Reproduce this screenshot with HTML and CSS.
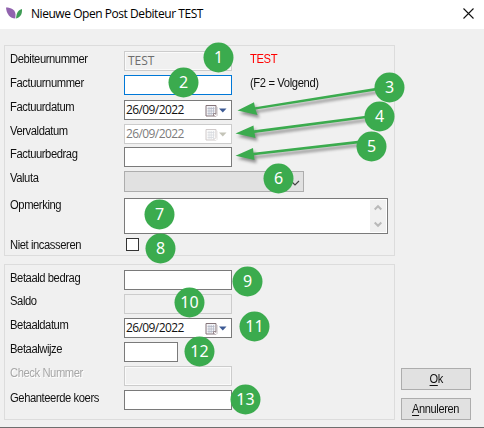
FILE: index.html
```
<!DOCTYPE html>
<html lang="nl">
<head>
<meta charset="utf-8">
<title>Nieuwe Open Post Debiteur TEST</title>
<link rel="stylesheet" href="styles.css">
</head>
<body>
<svg class="defs" width="0" height="0">
  <symbol id="cal" viewBox="0 0 22 13">
    <path d="M1 1.5h10v8l-2.5 2.5h-7.5z" fill="#f3f3f6" stroke="#85757a"/>
    <path d="M12 3v8.5l-1 1H3" fill="none" stroke="#c4bcbf"/>
    <path d="M2.500 4.500h7M2.500 7h7M2.500 9.500h6M4 3v8M6.200 3v8M8.500 3v8" stroke="#b4b9c8" stroke-width=".8"/>
    <path d="M8.500 12v-2.500h2.500" fill="#fff" stroke="#85757a" stroke-width=".8"/>
    <path d="M14 4.500h7.500l-3.750 4z" fill="#3d5a94"/>
  </symbol>
  <symbol id="cal-off" viewBox="0 0 22 13">
    <path d="M1 1.5h10v8l-2.5 2.5h-7.5z" fill="#fafafa" stroke="#d0caca"/>
    <path d="M12 3v8.5l-1 1H3" fill="none" stroke="#e6e4e4"/>
    <path d="M2.500 4.500h7M2.500 7h7M2.500 9.500h6M4 3v8M6.200 3v8M8.500 3v8" stroke="#d8dae0" stroke-width=".8"/>
    <path d="M14 4.500h7.500l-3.750 4z" fill="#c4c4b8"/>
  </symbol>
</svg>
<div class="window">
  <header class="titlebar">
    <svg class="logo" width="17" height="13" viewBox="0 0 17 13">
      <path d="M0 .5C5 .5 9.500 3 9.500 7.500L9.300 11.500C4 11.500.5 7 0 .5z" fill="#9163ae"/>
      <path d="M16 2C12.500 2.800 10.500 5.500 10 11.500C14.500 10.500 16.300 7 16 2z" fill="#3f9c55"/>
    </svg>
    <h1>Nieuwe Open Post Debiteur TEST</h1>
    <svg class="close" width="11" height="11" viewBox="0 0 11 11"><path d="M.5.5l10 10M10.500.5l-10 10" stroke="#111" stroke-width="1.100"/></svg>
  </header>
  <main>
    <div class="groups">
      <section class="group">
        <div class="row"><label><span>Debiteurnummer</span></label><div class="field off sunk"><span class="code">TEST</span></div><span class="note red">TEST</span></div>
        <div class="row"><label><span>Factuurnummer</span></label><div class="field focus"></div><span class="note">(F2 = Volgend)</span></div>
        <div class="row up"><label><span>Factuurdatum</span></label><div class="field"><span class="date">26/09/2022</span><svg class="cal"><use href="#cal"/></svg></div></div>
        <div class="row short up"><label><span>Vervaldatum</span></label><div class="field dim"><span class="date">26/09/2022</span><svg class="cal"><use href="#cal-off"/></svg></div></div>
        <div class="row up"><label><span>Factuurbedrag</span></label><div class="field"></div></div>
        <div class="row valuta up"><label><span>Valuta</span></label><div class="combo"><svg width="10" height="6" viewBox="0 0 10 6"><path d="M1 1l4 4 4-4" fill="none" stroke="#444" stroke-width="1.200"/></svg></div></div>
        <div class="row memo up"><label><span>Opmerking</span></label><div class="textarea"><div class="scroll">
          <svg width="8" height="7" viewBox="0 0 8 7"><path d="M.7 5.500L4 2.200l3.300 3.300" fill="none" stroke="#b9b9b9" stroke-width="2"/></svg>
          <svg width="8" height="7" viewBox="0 0 8 7"><path d="M.7 1.500L4 4.800l3.300-3.300" fill="none" stroke="#b9b9b9" stroke-width="2"/></svg>
        </div></div></div>
        <div class="row up"><label><span>Niet incasseren</span></label><div class="box"></div></div>
      </section>
      <section class="group second">
        <div class="row"><label><span>Betaald bedrag</span></label><div class="field"></div></div>
        <div class="row up"><label><span>Saldo</span></label><div class="field off"></div></div>
        <div class="row up"><label><span>Betaaldatum</span></label><div class="field"><span class="date">26/09/2022</span><svg class="cal"><use href="#cal"/></svg></div></div>
        <div class="row up"><label><span>Betaalwijze</span></label><div class="field small"></div></div>
        <div class="row up"><label class="faded"><span>Check Nummer</span></label><div class="field off sunk"></div></div>
        <div class="row"><label><span>Gehanteerde koers</span></label><div class="field"></div></div>
      </section>
    </div>
    <div class="buttons">
      <button><span><u>O</u>k</span></button>
      <button><span><u>A</u>nnuleren</span></button>
    </div>
  </main>
  <svg class="arrows" width="484" height="428" viewBox="0 0 484 428">
    <g fill="#3bab4e" stroke="none">
      <path d="M237.500 110.500L254 102.200 255 107.200 378 87.500 378 90.200 255.500 109.600 257.500 115z"/>
      <path d="M235.500 133.500L253.500 125.500 254 130.300 368 115.400 368 118 254.500 132.900 255.500 138z"/>
      <path d="M235.500 155.800L253 148 253.500 152.700 360 140.600 360 143.300 254 155.300 254.500 160z"/>
    </g>
  </svg>
  <div class="badges">
    <b class="b1">1</b><b class="b2">2</b><b class="b3">3</b><b class="b4">4</b><b class="b5">5</b><b class="b6">6</b><b class="b7">7</b><b class="b8">8</b><b class="b9">9</b><b class="b10">10</b><b class="b11">11</b><b class="b12">12</b><b class="b13">13</b>
  </div>
</div>
</body>
</html>
```
FILE: styles.css
```
* { box-sizing: border-box; }
body { margin: 0; }
.defs { position: absolute; }
.window {
  position: relative;
  width: 484px;
  height: 428px;
  overflow: hidden;
  background: #f0f0f0;
  border-bottom: 1px solid #6e6e6e;
  font: 12px/14px "Liberation Sans", sans-serif;
  color: #111;
}
.titlebar {
  display: flex;
  align-items: flex-start;
  height: 29px;
  padding: 7px 10px 0 6px;
  background: #fff;
}
.logo { flex: none; }
.titlebar h1 {
  margin: -1px auto 0 8px;
  font: 12px/16px "Open Sans", sans-serif;
  letter-spacing: -0.45px;
  white-space: nowrap;
  color: #000;
}
.close { margin-top: 1px; }
main { display: flex; padding: 16px 13px 0 4px; }
.groups { width: 391px; }
.group {
  height: 211px;
  padding: 5px 0 0 5px;
  border: 1px solid #dcdcdc;
}
.second { height: 156px; margin-top: 8px; }
.row { display: flex; height: 24px; }
.row.short { height: 23px; }
.row:nth-child(2) { height: 25px; }
.second .row:nth-child(2) { height: 24px; }
label {
  width: 114px;
  flex: none;
  padding-top: 1px;
  letter-spacing: -0.45px;
  white-space: nowrap;
}
.up label { padding-top: 0; }
label span, .note { display: inline-block; transform: scaleX(.935); transform-origin: 0 0; }
.faded { color: #a7a7a7; text-shadow: 1px 1px #fff; }
.field {
  display: flex;
  width: 108px;
  height: 20px;
  flex: none;
  border: 1px solid #7a7a7a;
  background: #fff;
}
.focus { border-color: #0078d7; }
.off { border-color: #ccc; background: #f0f0f0; }
.sunk { box-shadow: inset 0 0 0 1px #fafafa; }
.dim { border-color: #ccc; color: #7c7c7c; }
.small { width: 54px; }
.code { padding: 1px 0 0 3px; color: #6d6d6d; font: 12px/15px "Open Sans", sans-serif; }
.date { width: 80px; padding: 1px 0 0 1px; font: 12px/16px "Open Sans", sans-serif; letter-spacing: -0.6px; }
.cal { width: 22px; height: 13px; margin-top: 3px; }
.note { margin: 1px 0 0 18px; letter-spacing: -0.4px; white-space: nowrap; }
.red { color: #f00; }
.row.valuta { height: 27px; }
.combo {
  display: flex;
  width: 180px;
  height: 21px;
  justify-content: flex-end;
  padding: 8px 3px 0 0;
  border: 1px solid #adadad;
  background: #e1e1e1;
}
.row.memo { height: 40px; }
.textarea {
  width: 264px;
  height: 36px;
  padding: 1px;
  border: 1px solid #7a7a7a;
  background: #fff;
}
.scroll {
  display: flex;
  flex-direction: column;
  align-items: center;
  justify-content: space-between;
  width: 16px;
  height: 32px;
  margin-left: auto;
  padding: 4px 0;
  background: #f0f0f0;
}
.box { width: 13px; height: 13px; margin-left: 2px; border: 1px solid #333; background: #fff; }
.buttons { display: flex; flex-direction: column; gap: 8px; margin: 323px 0 0 6px; }
button {
  width: 70px;
  height: 22px;
  padding: 0;
  border: 1px solid #adadad;
  background: #e1e1e1;
  font: 12px/16px "Liberation Sans", sans-serif;
  letter-spacing: -0.4px;
  color: #111;
}
button span { display: inline-block; transform: scaleX(.92); }
u { text-underline-offset: 2px; }
.arrows { position: absolute; left: 0; top: 0; filter: drop-shadow(2px 3px 1.500px rgba(0,0,0,.4)); }
.badges b {
  position: absolute;
  width: 30px;
  height: 30px;
  border-radius: 50%;
  background: #3bab4e;
  color: #fff;
  font: 16px/29px "Noto Sans", sans-serif;
  text-align: center;
  transform: translate(.5px, .5px);
}
.b1 { left: 203px; top: 42px; }
.b2 { left: 168px; top: 67px; }
.b3 { left: 374px; top: 72px; }
.b4 { left: 364px; top: 101px; }
.b5 { left: 356px; top: 131px; }
.b6 { left: 263px; top: 163px; }
.b7 { left: 144px; top: 199px; }
.b8 { left: 145px; top: 233px; }
.b9 { left: 232px; top: 266px; }
.b10 { left: 174px; top: 287px; }
.b11 { left: 239px; top: 311px; }
.b12 { left: 184px; top: 336px; }
.b13 { left: 230px; top: 384px; }
```
